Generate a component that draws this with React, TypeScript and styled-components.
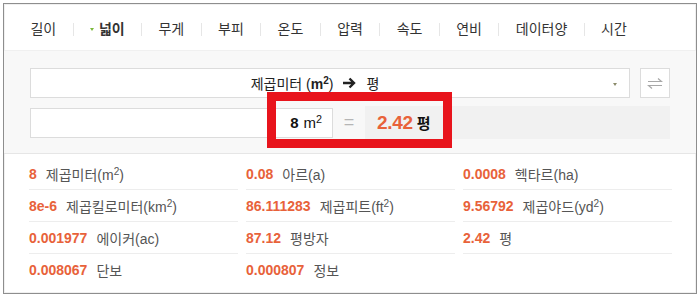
import styled, { createGlobalStyle } from "styled-components";

const GlobalStyle = createGlobalStyle`
  body {
    margin: 0;
    background: #fff;
    font-family: "Liberation Sans", "Noto Sans CJK KR", sans-serif;
  }
`;

const Frame = styled.div`
  position: relative;
  box-sizing: border-box;
  width: 694px;
  height: 291px;
  margin: 3px;
  border: 1px solid #8e8e8e;
  box-shadow: inset 0 0 0 1px #f0f0f0;
  background: #fff;
`;

const Tabs = styled.ul`
  display: flex;
  align-items: center;
  box-sizing: border-box;
  height: 46px;
  margin: 0;
  padding: 4px 0 0 10px;
  list-style: none;
`;

const Tab = styled.li<{ $active?: boolean }>`
  display: flex;
  align-items: center;
  gap: 5px;
  height: 13px;
  padding: 0 16.4px;
  font-size: 14px;
  line-height: 13px;
  color: #333;
  font-weight: ${(p) => (p.$active ? 700 : 400)};

  & + & {
    border-left: 1px solid #e6e6e6;
  }
`;

const ActiveMark = styled.span`
  width: 0;
  height: 0;
  border-left: 2.5px solid transparent;
  border-right: 2.5px solid transparent;
  border-top: 3px solid #7cba3c;
`;

const Panel = styled.div`
  display: flex;
  flex-direction: column;
  gap: 8px;
  padding: 17px 26px 14px;
  background: #f8f8f8;
  border-top: 1px solid #f0f0f0;
  border-bottom: 1px solid #e6e6e6;
`;

const SelectRow = styled.div`
  display: flex;
  gap: 10px;
  height: 30px;
`;

const Select = styled.div`
  position: relative;
  flex: 1;
  display: flex;
  align-items: center;
  justify-content: center;
  gap: 9px;
  padding-right: 30px;
  box-sizing: border-box;
  background: #fff;
  border: 1px solid #dcdcdc;
  font-size: 14px;
  color: #222;

  b {
    font-weight: 700;
  }
`;

const Caret = styled.span`
  position: absolute;
  right: 12px;
  top: 14px;
  border-left: 2.5px solid transparent;
  border-right: 2.5px solid transparent;
  border-top: 3px solid #8a8a6a;
`;

const SwapButton = styled.button`
  width: 30px;
  padding: 0;
  display: flex;
  align-items: center;
  justify-content: center;
  background: #fff;
  border: 1px solid #dcdcdc;
`;

const InputRow = styled.div`
  display: flex;
  align-items: center;
  height: 33px;
`;

const InputBox = styled.div`
  box-sizing: border-box;
  width: 303px;
  height: 30px;
  display: flex;
  align-items: center;
  justify-content: flex-end;
  gap: 5px;
  padding-right: 10px;
  background: #fff;
  border: 1px solid #dcdcdc;
  font-size: 15px;
  color: #111;
`;

const Equals = styled.span`
  width: 32px;
  text-align: center;
  font-size: 18px;
  color: #b5b5b5;
`;

const ResultBox = styled.div`
  flex: 1;
  align-self: stretch;
  display: flex;
  align-items: center;
  gap: 4px;
  padding-left: 12px;
  background: #f1f1f1;
  font-weight: 700;
  color: #111;
  font-size: 15px;
`;

const BigValue = styled.span`
  font-size: 19px;
  color: #e8623a;
  letter-spacing: -0.3px;
`;

const Sup = styled.sup`
  font-size: 0.72em;
  vertical-align: 0.5em;
  line-height: 0;
`;

const Results = styled.ul`
  display: grid;
  grid-template-columns: repeat(3, 209px);
  column-gap: 8px;
  margin: 0;
  padding: 4px 25px 0;
  list-style: none;
`;

const Item = styled.li<{ $last?: boolean }>`
  display: flex;
  align-items: center;
  gap: 9px;
  height: 31px;
  border-bottom: ${(p) => (p.$last ? "none" : "1px solid #ededed")};
`;

const Value = styled.span`
  font-size: 14px;
  font-weight: 700;
  color: #e8623a;
`;

const Label = styled.span`
  font-size: 14px;
  color: #555;
`;

const Highlight = styled.div`
  position: absolute;
  left: 263px;
  top: 88px;
  width: 185px;
  height: 56px;
  box-sizing: border-box;
  border: 9px solid #e8141c;
  pointer-events: none;
`;

const tabs = ["길이", "넓이", "무게", "부피", "온도", "압력", "속도", "연비", "데이터양", "시간"];

const results: { value: string; label: React.ReactNode }[] = [
  { value: "8", label: <>제곱미터(m<Sup>2</Sup>)</> },
  { value: "0.08", label: "아르(a)" },
  { value: "0.0008", label: "헥타르(ha)" },
  { value: "8e-6", label: <>제곱킬로미터(km<Sup>2</Sup>)</> },
  { value: "86.111283", label: <>제곱피트(ft<Sup>2</Sup>)</> },
  { value: "9.56792", label: <>제곱야드(yd<Sup>2</Sup>)</> },
  { value: "0.001977", label: "에이커(ac)" },
  { value: "87.12", label: "평방자" },
  { value: "2.42", label: "평" },
  { value: "0.008067", label: "단보" },
  { value: "0.000807", label: "정보" },
];

const ArrowIcon = () => (
  <svg width="15" height="12" viewBox="0 0 15 12">
    <path d="M1 6h11M7.5 1.5L12 6 7.5 10.5" fill="none" stroke="#222" strokeWidth="2.4" />
  </svg>
);

const SwapIcon = () => (
  <svg width="16" height="11" viewBox="0 0 16 11">
    <path d="M1 3.5h13.5L11 0.5M15 7.5H1.5L5 10.5" fill="none" stroke="#a8a8a8" strokeWidth="1.2" />
  </svg>
);

export default function App() {
  return (
    <>
      <GlobalStyle />
      <Frame>
        <Tabs>
          {tabs.map((t) => (
            <Tab key={t} $active={t === "넓이"}>
              {t === "넓이" && <ActiveMark />}
              {t}
            </Tab>
          ))}
        </Tabs>
        <Panel>
          <SelectRow>
            <Select>
              <span>
                제곱미터 (<b>m<Sup>2</Sup></b>)
              </span>
              <ArrowIcon />
              <span>평</span>
              <Caret />
            </Select>
            <SwapButton aria-label="swap">
              <SwapIcon />
            </SwapButton>
          </SelectRow>
          <InputRow>
            <InputBox>
              <b>8</b>
              <span>
                m<Sup>2</Sup>
              </span>
            </InputBox>
            <Equals>=</Equals>
            <ResultBox>
              <BigValue>2.42</BigValue>평
            </ResultBox>
          </InputRow>
        </Panel>
        <Results>
          {results.map((r, i) => (
            <Item key={i} $last={i >= 9}>
              <Value>{r.value}</Value>
              <Label>{r.label}</Label>
            </Item>
          ))}
        </Results>
        <Highlight />
      </Frame>
    </>
  );
}
